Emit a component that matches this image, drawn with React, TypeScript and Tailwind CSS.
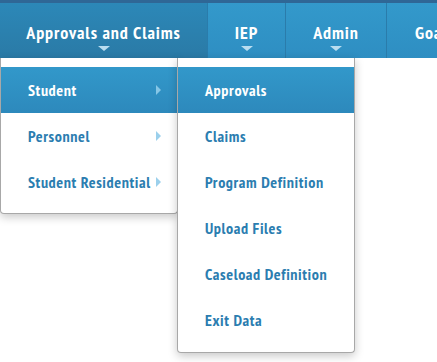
import React from "react";

const font = { fontFamily: '"Liberation Sans Narrow", "PT Sans Narrow", "Roboto", "Liberation Sans", sans-serif' };

function Caret() {
  return (
    <div className="absolute bottom-[7px] left-1/2 -translate-x-1/2 w-0 h-0 border-l-[6px] border-r-[6px] border-t-[5px] border-l-transparent border-r-transparent border-t-[#b9ddf0]" />
  );
}

function NavItem({ label, w, active, caret }: { label: string; w: number; active?: boolean; caret?: boolean }) {
  return (
    <div
      className={`relative flex items-center justify-center h-full border-r border-[#2a7cab] text-white font-bold text-[18px] tracking-[0.9px] shrink-0 ${
        active ? "bg-gradient-to-b from-[#2c88b8] to-[#2a7aa6]" : "bg-gradient-to-b from-[#3399cb] to-[#2e8ec2]"
      }`}
      style={{ width: w }}
    >
      <span className="pt-[3px] whitespace-nowrap">{label}</span>
      {caret && <Caret />}
    </div>
  );
}

function Row({ label, active, arrow }: { label: string; active?: boolean; arrow?: boolean }) {
  return (
    <div
      className={`relative flex items-center h-[46px] pl-[27px] font-bold text-[16px] tracking-[0.6px] ${
        active ? "bg-gradient-to-b from-[#3298ca] to-[#2d89bc] text-white" : "text-[#2b7db0]"
      }`}
    >
      <span className="whitespace-nowrap">{label}</span>
      {arrow && (
        <div
          className={`absolute right-[16px] top-1/2 -translate-y-1/2 w-0 h-0 border-t-[5px] border-b-[5px] border-l-[5px] border-t-transparent border-b-transparent ${
            active ? "border-l-[#86c6e6]" : "border-l-[#9bd0ec]"
          }`}
        />
      )}
    </div>
  );
}

export default function App() {
  return (
    <div className="relative w-[437px] h-[362px] bg-white overflow-hidden" style={font}>
      <div className="h-[3px] bg-[#2f6796]" />
      <div className="flex h-[55px] bg-gradient-to-b from-[#3399cb] to-[#2e8ec2]">
        <NavItem label="Approvals and Claims" w={208} active caret />
        <NavItem label="IEP" w={78} caret />
        <NavItem label="Admin" w={101} caret />
        <div className="flex items-center pl-[28px] text-white font-bold text-[18px] tracking-[0.9px] h-full">
          <span className="pt-[3px] whitespace-nowrap">Goals</span>
        </div>
      </div>

      <div className="absolute left-0 top-[58px] w-[178px] bg-white border border-t-0 border-[#a8a8a8] rounded-b-[4px] pt-[9px] pb-[8px] shadow-[0_3px_10px_rgba(0,0,0,0.22)]">
        <Row label="Student" active arrow />
        <Row label="Personnel" arrow />
        <Row label="Student Residential" arrow />
      </div>

      <div className="absolute left-[177px] top-[58px] w-[178px] bg-white border border-t-0 border-[#a8a8a8] rounded-b-[4px] pt-[9px] pb-[9px] shadow-[0_3px_10px_rgba(0,0,0,0.22)]">
        <Row label="Approvals" active />
        <Row label="Claims" />
        <Row label="Program Definition" />
        <Row label="Upload Files" />
        <Row label="Caseload Definition" />
        <Row label="Exit Data" />
      </div>
    </div>
  );
}
